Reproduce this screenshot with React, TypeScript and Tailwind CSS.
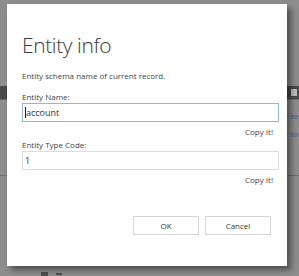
import React from 'react';

const Field = ({ label, value, focused }: { label: string; value: string; focused?: boolean }) => (
  <div className="flex flex-col">
    <label className="text-[8px] leading-[11px] text-[#444]">{label}</label>
    <div
      className={`mt-[1px] h-[19px] flex items-center px-[2px] text-[9px] text-[#333] bg-white border ${
        focused ? 'border-[#8fb4e6]' : 'border-[#dcdcdc]'
      }`}
    >
      {focused && <span className="w-px h-[11px] bg-[#222]" />}
      <span>{value}</span>
    </div>
    <div className="flex justify-end pr-[6px] mt-[4px]">
      <span className="text-[8px] leading-[11px] text-[#444]">Copy It!</span>
    </div>
  </div>
);

export default function App() {
  return (
    <div
      className="relative w-[299px] h-[276px] overflow-hidden bg-[#8d8d8d]"
      style={{ fontFamily: '"Open Sans", "Noto Sans", sans-serif' }}
    >
      {/* page behind the overlay */}
      <div className="flex flex-col pt-[86px]">
        <div className="h-[13px] bg-[#4a4a4a] flex justify-end pr-[2px] items-center">
          <span className="w-[6px] h-[7px] bg-[#bdbdbd]" />
        </div>
        <div className="h-px bg-[#b0553a]" />
        <div className="flex justify-end pr-[1px] pt-[7px] text-[8px] italic text-[#3b5a8a] leading-[18px]">
          <div className="flex flex-col">
            <span>r to</span>
            <span>r to</span>
          </div>
        </div>
        <div className="h-px bg-[#b0553a] mt-[32px]" />
        <div className="flex gap-[8px] pl-[41px] mt-[96px]">
          <span className="w-[7px] h-[5px] bg-[#4d4d4d]" />
          <span className="w-[6px] h-[2px] mt-[1px] bg-[#4d4d4d]" />
        </div>
      </div>

      {/* dialog */}
      <div className="absolute left-[7px] top-[4px] w-[280px] h-[262px] bg-white shadow-[4px_4px_6px_rgba(0,0,0,0.45)] pl-[15px] pr-[8px] flex flex-col">
        <h1 className="mt-[28px] text-[21px] leading-[26px] font-light text-[#3a3a3a] tracking-[-0.4px]">Entity info</h1>
        <p className="mt-[12px] text-[8px] leading-[11px] text-[#444]">Entity schema name of current record.</p>
        <div className="mt-[10px]">
          <Field label="Entity Name:" value="account" focused />
        </div>
        <div className="mt-[2px]">
          <Field label="Entity Type Code:" value="1" />
        </div>
        <div className="flex justify-end gap-[6px] mt-[31px] pr-[8px]">
          <button className="w-[66px] h-[19px] border border-[#d6d6d6] bg-white text-[8px] text-[#333]">OK</button>
          <button className="w-[66px] h-[19px] border border-[#d6d6d6] bg-white text-[8px] text-[#333]">Cancel</button>
        </div>
      </div>
    </div>
  );
}
